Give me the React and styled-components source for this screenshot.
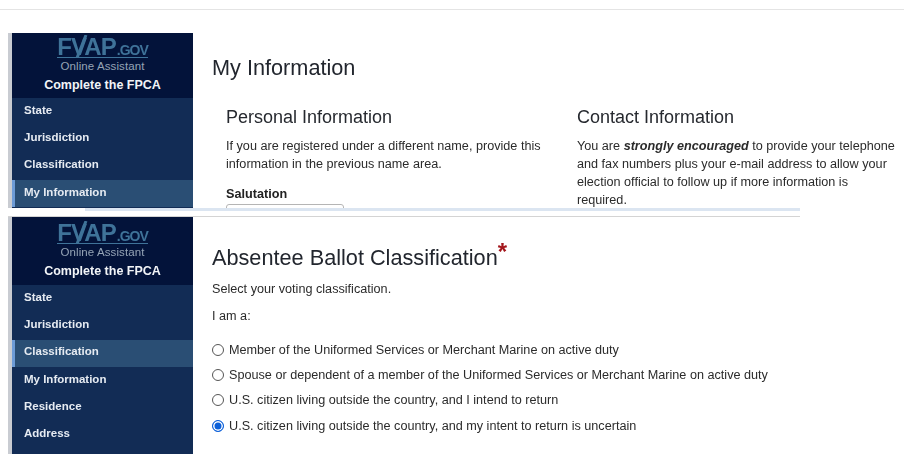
import React from "react";
import styled, { createGlobalStyle } from "styled-components";

const Global = createGlobalStyle`
  html, body { margin: 0; padding: 0; background: #fff; }
  body { font-family: "Liberation Sans", Arial, sans-serif; color: #222; }
`;

const Page = styled.div`
  width: 904px;
  height: 463px;
  overflow: hidden;
  display: flex;
  flex-direction: column;
  filter: blur(0.3px);
`;
const TopRule = styled.div`
  height: 1px;
  margin: 9px 0 23px;
  background: #e4e4e4;
`;
const Panel = styled.section`
  display: flex;
  height: ${(p) => p.$height}px;
  margin-left: 8px;
  overflow: hidden;
  flex: none;
`;
const Sidebar = styled.aside`
  width: 181px;
  flex: none;
  background: #122c55;
  border-left: 4px solid #c9ccd2;
  display: flex;
  flex-direction: column;
`;
const Brand = styled.div`
  height: ${(p) => p.$height}px;
  flex: none;
  overflow: hidden;
  background: #03133a;
  display: flex;
  flex-direction: column;
  align-items: center;
`;
const Logo = styled.div`
  position: relative;
  margin-top: ${(p) => p.$top}px;
  height: 22px;
  color: #3f7399;
  font-weight: 700;
  font-size: 24px;
  line-height: 24px;
  letter-spacing: -0.9px;
  white-space: nowrap;
  border-bottom: 1px solid #3f7399;
`;
const LogoGov = styled.span`
  font-size: 14px;
  letter-spacing: -1px;
  margin-left: 1px;
`;
const LogoSlash = styled.svg`
  position: absolute;
  left: 18px;
  top: 0;
  width: 14px;
  height: 23px;
`;
const Assistant = styled.div`
  font-size: 11.5px;
  line-height: 13px;
  margin-top: 2px;
  color: #95a4b6;
  letter-spacing: 0.1px;
`;
const Title = styled.div`
  font-size: 12.5px;
  line-height: 14px;
  margin-top: 5px;
  font-weight: 700;
  color: #f2f4f7;
`;
const NavItem = styled.div`
  height: 27.3px;
  flex: none;
  display: flex;
  align-items: center;
  box-sizing: border-box;
  padding: 0 0 4px ${(p) => (p.$active ? 9 : 12)}px;
  font-size: 11.5px;
  font-weight: 700;
  color: #e6ebf2;
  background: ${(p) => (p.$active ? "#2a4e74" : "transparent")};
  border-left: ${(p) => (p.$active ? "3px solid #6d9bd6" : "none")};
`;
const Main = styled.main`
  flex: 1;
  min-width: 0;
  padding-left: 19px;
`;
const Heading = styled.h1`
  margin: ${(p) => p.$top}px 0 0;
  font-size: 21.7px;
  line-height: 26px;
  font-weight: 400;
  color: #22262e;
`;
const Star = styled.span`
  color: #a3161c;
  font-size: 24px;
  font-weight: 700;
  position: relative;
  top: -5px;
  line-height: 0;
`;
const Columns = styled.div`
  display: grid;
  grid-template-columns: 351px 330px;
  margin: 25px 0 0 14px;
`;
const SubHeading = styled.h2`
  margin: 0;
  font-size: 18px;
  line-height: 22px;
  font-weight: 400;
  color: #26292f;
`;
const Text = styled.p`
  margin: ${(p) => p.$top || 0}px 0 0;
  font-size: 12.65px;
  line-height: 18px;
  color: #2b2b2b;
  white-space: nowrap;
`;
const FieldLabel = styled.div`
  margin-top: 14px;
  font-size: 12.65px;
  line-height: 14px;
  font-weight: 700;
  color: #222;
`;
const SelectBox = styled.div`
  margin-top: 3px;
  width: 118px;
  height: 30px;
  box-sizing: border-box;
  border: 1px solid #b5b5b5;
  border-radius: 3px;
`;
const Band = styled.div`
  height: 3px;
  margin: 0 104px 0 85px;
  background: #dbe5f1;
  flex: none;
`;
const Rule = styled.div`
  height: 1px;
  margin: 5px 104px 0 8px;
  background: #d4d4d4;
  flex: none;
`;
const RadioList = styled.div`
  display: flex;
  flex-direction: column;
  margin-top: 12px;
`;
const RadioRow = styled.label`
  height: 25.3px;
  display: flex;
  align-items: center;
  gap: 5px;
  font-size: 12.65px;
  color: #2b2b2b;
  white-space: nowrap;
`;
const RadioDot = styled.input`
  appearance: none;
  margin: 0;
  width: 12px;
  height: 12px;
  box-sizing: border-box;
  border-radius: 50%;
  border: 1px solid #555;
  background: #fff;
  &:checked {
    border: 1.5px solid #0b5fd8;
    box-shadow: inset 0 0 0 1.5px #fff;
    background: #0b5fd8;
  }
`;

const firstNav = ["State", "Jurisdiction", "Classification", "My Information"];
const secondNav = ["State", "Jurisdiction", "Classification", "My Information", "Residence", "Address"];
const options = [
  "Member of the Uniformed Services or Merchant Marine on active duty",
  "Spouse or dependent of a member of the Uniformed Services or Merchant Marine on active duty",
  "U.S. citizen living outside the country, and I intend to return",
  "U.S. citizen living outside the country, and my intent to return is uncertain",
];

function SideMenu({ items, active, brandHeight, logoTop }) {
  return (
    <Sidebar>
      <Brand $height={brandHeight}>
        <Logo $top={logoTop}>
          FVAP<LogoGov>.GOV</LogoGov>
          <LogoSlash viewBox="0 0 14 23" aria-hidden="true">
            <path d="M2 23 L11 0" stroke="#3f7399" strokeWidth="3" fill="none" />
          </LogoSlash>
        </Logo>
        <Assistant>Online Assistant</Assistant>
        <Title>Complete the FPCA</Title>
      </Brand>
      {items.map((item) => (
        <NavItem key={item} $active={item === active}>
          {item}
        </NavItem>
      ))}
    </Sidebar>
  );
}

export default function App() {
  return (
    <Page>
      <Global />
      <TopRule />
      <Panel $height={175}>
        <SideMenu items={firstNav} active="My Information" brandHeight={65} logoTop={2} />
        <Main>
          <Heading $top={22}>My Information</Heading>
          <Columns>
            <div>
              <SubHeading>Personal Information</SubHeading>
              <Text $top={9}>
                If you are registered under a different name, provide this
                <br />
                information in the previous name area.
              </Text>
              <FieldLabel>Salutation</FieldLabel>
              <SelectBox />
            </div>
            <div>
              <SubHeading>Contact Information</SubHeading>
              <Text $top={9}>
                You are <b><i>strongly encouraged</i></b> to provide your telephone
                <br />
                and fax numbers plus your e-mail address to allow your
                <br />
                election official to follow up if more information is
                <br />
                required.
              </Text>
            </div>
          </Columns>
        </Main>
      </Panel>
      <Band />
      <Rule />
      <Panel $height={237}>
        <SideMenu items={secondNav} active="Classification" brandHeight={68} logoTop={4} />
        <Main>
          <Heading $top={28}>
            Absentee Ballot Classification<Star>*</Star>
          </Heading>
          <Text $top={9}>Select your voting classification.</Text>
          <Text $top={9}>I am a:</Text>
          <RadioList>
            {options.map((option, i) => (
              <RadioRow key={option}>
                <RadioDot type="radio" name="classification" defaultChecked={i === 3} />
                {option}
              </RadioRow>
            ))}
          </RadioList>
        </Main>
      </Panel>
    </Page>
  );
}
